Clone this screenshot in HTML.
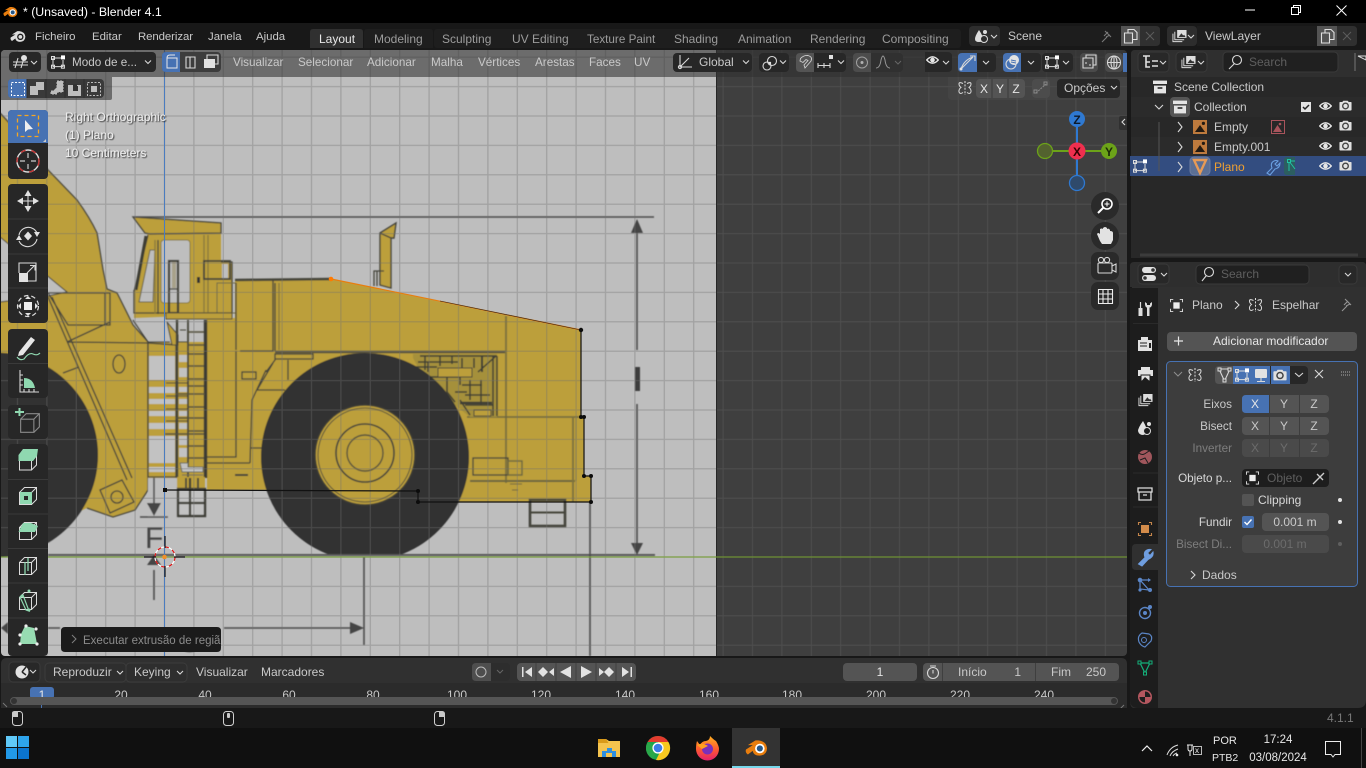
<!DOCTYPE html>
<html lang="pt"><head><meta charset="utf-8"><title>Blender 4.1</title>
<style>
html,body{margin:0;padding:0;background:#000;width:1366px;height:768px;overflow:hidden}
svg{display:block}
text{font-family:"Liberation Sans",sans-serif;font-size:12px;fill:#c9c9c9}
.tab{fill:#9c9c9c}.d{fill:#6c6c6c}.m{text-anchor:middle}.e{text-anchor:end;font-size:11.700px}.w{fill:#e6e6e6}
.tb{fill:#ececec}.ic{fill:none;stroke:#d8d8d8;stroke-width:1.100}.f{fill:#e2e2e2}
.dk{fill:#272727}.bt{fill:#545454}.bl{fill:#4772b3}
.l{fill:none;stroke:#45443a;stroke-width:1.300}.lt{fill:none;stroke:#8a7a3e;stroke-width:1.400}
.dim{fill:none;stroke:#4c4c4c;stroke-width:1.600}
.tm{font-size:11.400px}.hd{font-size:11.700px}.tr{font-size:11.500px;fill:#e8e8e8}
</style></head><body>
<svg width="1366" height="768" viewBox="0 0 1366 768" xmlns="http://www.w3.org/2000/svg">
<defs>
<pattern id="g1" patternUnits="userSpaceOnUse" x="149.800" y="542.300" width="29.400" height="29.400"><path d="M14.700 0V29.400M0 14.700H29.400" stroke="#707070" stroke-opacity=".36" stroke-width="1.300" fill="none"/></pattern>
<pattern id="g2" patternUnits="userSpaceOnUse" x="149.800" y="542.300" width="29.400" height="29.400"><path d="M14.700 0V29.400M0 14.700H29.400" stroke="#4e4e4e" stroke-width="1" fill="none"/></pattern>
<filter id="b" x="-5%" y="-5%" width="110%" height="110%"><feGaussianBlur stdDeviation=".6"/></filter>
<filter id="s" x="-5%" y="-20%" width="110%" height="140%"><feDropShadow dx="1" dy="1" stdDeviation=".6" flood-color="#000" flood-opacity=".75"/></filter>
<clipPath id="vp"><rect x="1" y="50" width="1126" height="606" rx="4"/></clipPath>
<clipPath id="im"><rect x="1" y="50" width="715" height="606"/></clipPath>
<clipPath id="wh"><rect x="200" y="340" width="300" height="216"/></clipPath>
<clipPath id="pop"><rect x="61" y="627" width="160" height="25"/></clipPath>
<symbol id="eye" viewBox="0 0 14 10"><path d="M.8 5Q7-1.800 13.200 5Q7 11.800 .8 5Z" fill="none" stroke="#e6e6e6" stroke-width="1.500"/><circle cx="7" cy="5" r="2.500" fill="#e6e6e6"/></symbol>
<symbol id="cam" viewBox="0 0 14 12"><path d="M1.200 2.200H3.500L4.600 .8H9.400L10.500 2.200H12.800Q13.600 2.200 13.600 3V10.600Q13.600 11.400 12.800 11.400H1.200Q.4 11.400 .4 10.600V3Q.4 2.200 1.200 2.200Z" fill="#e0e0e0"/><circle cx="7" cy="6.500" r="3.800" fill="#444"/><circle cx="7" cy="6.500" r="2.300" fill="#e0e0e0"/></symbol>
<symbol id="bl" viewBox="0 0 24 18"><path fill="#e87d0d" d="M1 10.500L8.200 6H3L11 1H14Q22 2 23 9Q23 16.500 15 17Q9 17 8 12L3 15.800Q0 13.600 1 10.500Z"/><circle cx="15.500" cy="9.500" r="5" fill="#fff"/><circle cx="15.500" cy="9.500" r="3.200" fill="#265787"/></symbol>
<symbol id="blw" viewBox="0 0 24 18"><path fill="#dcdcdc" d="M1 10.500L8.200 6H3L11 1H14Q22 2 23 9Q23 16.500 15 17Q9 17 8 12L3 15.800Q0 13.600 1 10.500Z"/><circle cx="15.500" cy="9.500" r="4.800" fill="#181818"/><circle cx="15.500" cy="9.500" r="2.800" fill="#dcdcdc"/></symbol>
<symbol id="mir" viewBox="0 0 14 14"><path d="M7 0V14" stroke="#ddd" stroke-dasharray="2 1.400" fill="none"/><path d="M5 2.500Q1 .5 1 3Q1 5 3 6.500Q.6 8 1 11Q2 13.600 5 11.500M9 2.500Q13 .5 13 3Q13 5 11 6.500Q13.400 8 13 11Q12 13.600 9 11.500" fill="none" stroke="#ddd"/></symbol>
<symbol id="col" viewBox="0 0 14 14"><path d="M0 .6H14V4H0Z" fill="#e4e4e4"/><path d="M1 5.600H13V13.400H1Z" fill="#e4e4e4"/><rect x="4.600" y="7.200" width="4.800" height="1.600" fill="#282828"/></symbol>
<symbol id="vtx" viewBox="0 0 14 14"><path d="M2 3H10.400M2 3V11.600H12V5" fill="none" stroke="#ddd"/><rect x=".5" y="1.500" width="3" height="3" fill="none" stroke="#ddd"/><rect x=".5" y="10.200" width="3" height="3" fill="none" stroke="#ddd"/><rect x="10.400" y="10.200" width="3" height="3" fill="none" stroke="#ddd"/><rect x="10" y=".4" width="4" height="4" fill="#fff"/></symbol>
<symbol id="lay" viewBox="0 0 16 14"><path d="M1 4.500V13H11" fill="none" stroke="#ddd"/><path d="M3 2.500V11H13" fill="none" stroke="#ddd"/><rect x="5.500" y=".6" width="10" height="8.400" fill="#ddd"/><path d="M7 8L10 4L12 6.400L13 5.600L14.400 8Z" fill="#333"/></symbol>
<symbol id="ctr" viewBox="0 0 14 14"><path d="M.5 3.500V.5H3.500M10.500 .5H13.500V3.500M13.500 10.500V13.500H10.500M3.500 13.500H.5V10.500" fill="none" stroke="#ddd"/><rect x="3.600" y="3.600" width="6.800" height="6.800" fill="#ededed"/></symbol>
<symbol id="emp" viewBox="0 0 14 14"><rect width="14" height="14" fill="#bd7a3d"/><path d="M2 12L7 5L12 12Z" fill="#221a12"/><circle cx="10.400" cy="3.400" r="1.600" fill="#221a12"/></symbol>
<symbol id="cube" viewBox="0 0 20 20"><path d="M1.500 6.500H13.500V18.500H1.500ZM1.500 6.500L6.500 1.500H18.500V13.500L13.500 18.500M13.500 6.500L18.500 1.500" fill="none" stroke="#dcdcdc" stroke-width="1"/></symbol>
<linearGradient id="ff" x1="0" y1="0" x2="0" y2="1"><stop offset="0" stop-color="#ffb020"/><stop offset=".55" stop-color="#ff5a30"/><stop offset="1" stop-color="#e3206f"/></linearGradient>
</defs>

<!-- base -->
<rect width="1366" height="768" fill="#181818"/>
<rect width="1366" height="23" fill="#000"/>
<use href="#bl" x="3" y="6" width="15" height="12"/>
<text x="23" y="16" style="fill:#fff;font-size:12.300px">* (Unsaved) - Blender 4.1</text>
<path d="M1245 10H1255" stroke="#fff"/><path d="M1291.500 7.500H1298.500V14.500H1291.500ZM1293.500 7.500V5.500H1300.500V12.500H1298.500" stroke="#fff" fill="none"/><path d="M1336.500 5.500L1346.500 15.500M1346.500 5.500L1336.500 15.500" stroke="#fff" fill="none"/>

<!-- topbar -->
<use href="#blw" x="10" y="30" width="16" height="13"/>
<text x="35" y="40" class="tm">Ficheiro</text><text x="92" y="40" class="tm">Editar</text><text x="138" y="40" class="tm" textLength="55">Renderizar</text><text x="208" y="40" class="tm">Janela</text><text x="256" y="40" class="tm">Ajuda</text>
<path d="M310 48V32Q310 29 313 29H360Q363 29 363 32V48Z" fill="#303030"/>
<path d="M364 48V32Q364 29 367 29H430Q433 29 433 32V48Z" fill="#1e1e1e"/>
<rect x="434" y="29" width="527" height="19" rx="3" fill="#1e1e1e"/>
<text x="319" y="43" class="w">Layout</text>
<text x="374" y="43" class="tab">Modeling</text><text x="442" y="43" class="tab">Sculpting</text><text x="512" y="43" class="tab">UV Editing</text><text x="587" y="43" class="tab hd">Texture Paint</text><text x="674" y="43" class="tab">Shading</text><text x="738" y="43" class="tab">Animation</text><text x="810" y="43" class="tab">Rendering</text><text x="882" y="43" class="tab">Compositing</text>

<!-- scene selectors -->
<rect x="969" y="26" width="31" height="20" rx="4" fill="#2d2d2d"/>
<path d="M979 30Q975 36 975 39Q975 42 979 42Q983 42 983 39Q983 36 979 30Z" fill="#ddd"/><circle cx="985" cy="32" r="2" fill="#ddd"/><circle cx="984" cy="39" r="3.500" fill="#2d2d2d" stroke="#ddd"/>
<path d="M991 35l3 3l3-3" class="ic"/>
<rect x="1000" y="26" width="121" height="20" fill="#1d1d1d"/><text x="1008" y="40">Scene</text>
<path d="M1102 42l5-5M1105 31l6 6M1108 32l-4 4M1110 35l-4 2" class="ic" stroke-opacity=".5"/>
<rect x="1121" y="26" width="19" height="20" fill="#545454"/><path d="M1128 33V29.500H1134L1137 32.500V39.500H1133M1124.500 33H1132.500V43H1124.500Z" fill="none" stroke="#e0e0e0" stroke-width="1.100"/>
<path d="M1140 26h16q4 0 4 4v12q0 4-4 4h-16Z" fill="#303030"/><path d="M1146 32l8 8M1154 32l-8 8" stroke="#5d5d5d" fill="none"/>
<rect x="1167" y="26" width="30" height="20" rx="4" fill="#2d2d2d"/><use href="#lay" x="1172" y="29" width="15" height="14"/><path d="M1188 35l3 3l3-3" class="ic"/>
<rect x="1197" y="26" width="120" height="20" fill="#1d1d1d"/><text x="1205" y="40">ViewLayer</text>
<rect x="1317" y="26" width="20" height="20" fill="#545454"/><path d="M1325 33V29.500H1331L1334 32.500V39.500H1330M1321.500 33H1329.500V43H1321.500Z" fill="none" stroke="#e0e0e0" stroke-width="1.100"/>
<path d="M1337 26h16q4 0 4 4v12q0 4-4 4h-16Z" fill="#303030"/><path d="M1343 32l8 8M1351 32l-8 8" stroke="#5d5d5d" fill="none"/>

<!-- viewport -->
<g clip-path="url(#vp)">
<rect x="0" y="50" width="1128" height="606" fill="#3f3f3f"/>
<rect x="716" y="50" width="412" height="606" fill="url(#g2)"/>
<rect x="716" y="50" width="1" height="606" fill="#262626"/>
<g clip-path="url(#im)">
<rect x="1" y="50" width="715" height="606" fill="#bebebe"/>
<g filter="url(#b)">
<!-- loader bucket / arm -->
<path d="M0 113Q30 145 48 170L77 200Q90 218 97 233L103 270L107 289L117 293L133 325L148 342V490L135 510L113 517L87 508L60 520L0 540Z" fill="#bc9f3b"/>
<path d="M0 113Q30 145 48 170L77 200Q90 218 97 233L103 270L107 289L117 293L133 325L148 342V490L135 510L113 517L87 508" class="l"/>
<path d="M0 237L67 292L48 296L0 302Z" fill="#bebebe" stroke="#45443a"/>
<path d="M48 293H110V325H68ZM105 293V325M110 322L67 342M67 342L148 343M48 297L127 480M52 297L132 478M63 373L79 367" class="l"/>
<ellipse cx="119" cy="364" rx="6" ry="9" class="l"/>
<path d="M100 490L122 480L134 502L110 513Z" class="l"/><circle cx="117" cy="497" r="6" class="l"/>
<!-- engine section background -->
<rect x="148" y="342" width="60" height="136" fill="#bc9f3b"/>
<path d="M148 343L176 345V477H148Z" class="l"/>
<!-- main body -->
<path d="M207 318H235V281L331 279L581 330V417H584V476H591V502H418V490H207Z" fill="#bc9f3b"/>
<path d="M235 280L331 279" stroke="#45443a" stroke-width="2.500" fill="none"/>
<!-- cabin -->
<path d="M133 217L221 223V262H232V314L134 318V290L148 235L145 233Z" fill="#bc9f3b"/>
<path d="M133 217L221 223V233L150 234L145 233ZM134 290V313L232 313V262H221M148 235L134 292" class="l"/>
<path d="M146 236L136 290" stroke="#3e3d36" stroke-width="3" fill="none"/>
<path d="M150 250L155 250L153 302L139 302Z" fill="#bebebe" stroke="#6a6548"/>
<path d="M155 240L155 314" class="lt"/><path d="M158 240L158 314" class="l"/>
<rect x="161" y="240" width="29" height="63" rx="3" fill="#bebebe" stroke="#8a7a3e"/>
<rect x="169" y="261" width="9" height="52" fill="none" stroke="#3e3d36" stroke-width="2.200"/>
<path d="M169 289H178" class="l"/><rect x="172" y="262" width="4" height="26" fill="#a8a28a"/>
<path d="M204 235V313" class="lt"/><path d="M208 235V313" class="lt"/>
<rect x="204" y="261" width="26" height="18" fill="none" stroke="#45443a" stroke-width="1.800"/><rect x="222" y="264" width="6" height="14" fill="#bebebe"/>
<rect x="197" y="277" width="3" height="6" fill="#333"/>
<rect x="217" y="283" width="19" height="30" fill="none" stroke="#6f6a48"/>
<rect x="166" y="313" width="66" height="6" fill="#bc9f3b" stroke="#55513c"/>
<!-- ladder and slots -->
<path d="M133 320L175 323V343L150 342Z" fill="#bebebe"/><path d="M133 320L148 342H170" class="l"/>
<path d="M167 322L178 335V345H172Z" fill="#bc9f3b" stroke="#45443a"/>
<g fill="#c2c2c2"><rect x="149" y="356" width="26" height="24"/><rect x="149" y="387" width="26" height="6"/><rect x="149" y="399" width="26" height="5"/><rect x="149" y="411" width="26" height="5"/><rect x="149" y="423" width="26" height="6"/><rect x="149" y="436" width="26" height="27"/><rect x="149" y="467" width="26" height="5"/>
<rect x="179" y="355" width="8" height="7"/><rect x="179" y="368" width="8" height="9"/><rect x="179" y="387" width="8" height="5"/><rect x="179" y="399" width="8" height="5"/><rect x="179" y="411" width="8" height="5"/><rect x="179" y="423" width="8" height="6"/><rect x="179" y="436" width="8" height="9"/><rect x="179" y="448" width="8" height="9"/></g>
<path d="M177 320V480" stroke="#45443a" stroke-width="2.400" fill="none"/><path d="M188 320V480" stroke="#45443a" stroke-width="1.800" fill="none"/><path d="M205.500 320V478" stroke="#3b3b36" stroke-width="3.400" fill="none"/>
<path d="M188 332H204M188 345H204M188 354H204M188 366H204M188 379H204M188 386H204M176 394H205M188 407H204M176 418H204M188 431H204M165 434H204M188 446H204M188 458H204" stroke="#55513c" stroke-width="1.600" fill="none"/>
<path d="M180 330H186M178 342H187M166 383H188M166 396H188M166 409H188M166 421H188" stroke="#45443a" fill="none"/>
<path d="M180 463H188V467H203V472H182ZM182 475H203" fill="#c2c2c2" stroke="#6a6a5a"/>
<!-- lower ladder -->
<rect x="148" y="478" width="29" height="40" fill="#bebebe"/>
<rect x="177" y="477" width="28" height="39" fill="#bc9f3b"/>
<rect x="178" y="489" width="27" height="27" fill="#c2c2c2" stroke="#3e3d36" stroke-width="2.400"/>
<path d="M190 478V516M178 503H205" stroke="#3e3d36" stroke-width="2.200" fill="none"/><path d="M186 478V490M198 478V490" stroke="#45443a" stroke-width="1.800" fill="none"/>
<!-- body details -->
<path d="M236 283V350M275 283V351M273 280V351H240" class="l"/><path d="M279 283V350" class="lt"/>
<path d="M275 352H505" stroke="#5a5540" stroke-width="2.400" fill="none"/>
<path d="M236 351V457H207M205 463H250" class="l"/>
<rect x="242" y="372" width="14" height="7" class="l"/>
<path d="M275 354H313V359H275ZM273 363L257 390H285M266 370L252 400L250 463M250 448H263M275 354V360L266 372M288 360V380" class="l"/>
<path d="M235 475H248" stroke="#45443a" stroke-width="2" fill="none"/>
<!-- hood details -->
<path d="M506 316V483" stroke="#80733e" stroke-width="2" fill="none"/>
<path d="M467 417H581" stroke="#6c6640" stroke-width="1.600" fill="none"/>
<path d="M470 481H575" stroke="#6c6640" stroke-width="2" fill="none"/>
<path d="M573 417V502" stroke="#80733e" stroke-width="2" fill="none"/>
<path d="M576 417V481" stroke="#9a8a3e" stroke-width="1" fill="none"/>
<rect x="473" y="458" width="35" height="17" class="l"/><rect x="508" y="461" width="14" height="14" fill="none" stroke="#6c6640" stroke-width="1.400"/>
<path d="M510 484H522M512 490H518" stroke="#6c6640" fill="none"/>
<!-- engine -->
<path d="M413 354H497V417H470L455 405L445 390L425 380L413 358Z" fill="#a5903a"/>
<path d="M420 356H497M418 362H458M425 356V370M440 356V366M415 367H437M430 377H460V385M447 377V392L455 402M455 392H467M470 380V400M478 372L496 356M481 380V405M462 385H482M465 395H490M465 405H493M493 356V416M497 356V416M428 362V372M452 356V364M462 358V368M474 358V368M460 400L470 415" stroke="#403f36" stroke-width="1.500" fill="none"/>
<path d="M460 403H492" stroke="#3e3d36" stroke-width="2.500" fill="none"/><path d="M482 356V372" stroke="#3e3d36" stroke-width="2" fill="none"/>
<rect x="438" y="368" width="34" height="9" fill="#bc9f3b" stroke="#45443a"/>
<path d="M474 410H491V416H474Z" fill="#bc9f3b" stroke="#45443a"/>
<!-- wheels -->
<circle cx="-4.400" cy="455" r="102.400" fill="#303030"/>
<circle cx="365" cy="457" r="104" fill="#303030" clip-path="url(#wh)"/>
<circle cx="365" cy="455" r="50" fill="#bc9f3b" stroke="#3e3d36" stroke-width="1.600"/>
<circle cx="365" cy="455" r="47" fill="none" stroke="#55513c"/>
<circle cx="365" cy="453" r="29" fill="#bc9f3b" stroke="#45443a" stroke-width="1.600"/>
<circle cx="365" cy="453" r="18" fill="none" stroke="#55513c" stroke-width="1.400"/>
<!-- exhaust -->
<path d="M380 233L396 223L394 238H391V288L380 285Z" fill="#bc9f3b" stroke="#45443a" stroke-width="1.400"/><path d="M380 233L391 238" class="l"/>
<path d="M374 286V271H384M377 271V286" class="l"/>
<!-- front step -->
<rect x="530" y="500" width="35" height="26" fill="none" stroke="#45443a" stroke-width="2.600"/><path d="M530 512.500H565" stroke="#45443a" stroke-width="2" fill="none"/>
<!-- dimensions -->
<path d="M133 217H654" stroke="#4c4c4c" stroke-width="1.500" fill="none"/>
<path d="M637 232V350M637 404V545" class="dim" stroke-width="1.800"/>
<path d="M637 219L631 233H643ZM637 555L631 543H643Z" fill="#444"/>
<rect x="635" y="367" width="5" height="24" fill="#3d3d3d"/>
<path d="M48 555H655" stroke="#565656" stroke-width="2" fill="none"/>
<path d="M154 478V510M154 570V600M140 517H168" class="dim"/>
<path d="M154 516L147 503H161ZM154 555L147 565H161Z" fill="#444"/>
<text x="145" y="548" style="font-size:30px;fill:#454545">F</text>
<text x="176" y="652" style="font-size:34px;fill:#454545">G</text>
<path d="M224 628H352M364 557V645M48 628H60M590 502V656" class="dim"/>
<path d="M364 628L350 622V634Z" fill="#444"/>
<path d="M1 628L8 622V634Z" fill="#444"/>
</g>
<rect x="1" y="50" width="715" height="606" fill="url(#g1)"/>
</g>
<!-- axes -->
<path d="M164.500 50V656" stroke="#4a7cc0" stroke-width="1"/>
<path d="M0 557H1128" stroke="#74a12e" stroke-width="1"/>
<!-- mesh -->
<path d="M581 330V417H584V476H591V502H418V491L165 490" fill="none" stroke="#111" stroke-width="1.200"/>
<path d="M331 279L581 330" stroke="#e87d0d" stroke-width="1.200" fill="none"/>
<path d="M440 301L581 330" stroke="#222" stroke-width=".6" fill="none"/>
<g fill="#0c0c0c"><circle cx="581" cy="330" r="2.200"/><circle cx="581" cy="417" r="2"/><circle cx="584" cy="417" r="2"/><circle cx="584" cy="476" r="2"/><circle cx="591" cy="476" r="2"/><circle cx="591" cy="502" r="2"/><circle cx="418" cy="502" r="2"/><circle cx="418" cy="491" r="2"/><rect x="163" y="488" width="4" height="4"/></g>
<circle cx="331" cy="279" r="2.300" fill="#ff7a00"/>
<!-- 3d cursor -->
<circle cx="165" cy="557" r="10" fill="none" stroke="#fff" stroke-width="1.200"/>
<circle cx="165" cy="557" r="10" fill="none" stroke="#e01010" stroke-width="1.200" stroke-dasharray="3.900 3.900"/>
<path d="M144 557H156M174 557H185M165 536V548M165 566V577" stroke="#111" stroke-width="1.200"/>
<circle cx="164.500" cy="557" r="2.300" fill="#f0902a"/>
<!-- header overlays -->
<rect x="0" y="50" width="1128" height="27" fill="#303030" fill-opacity=".58"/>
<path d="M1 77H112V98Q112 100 110 100H1Z" fill="#303030" fill-opacity=".58"/>
<path d="M948 77H1128V100H952Q948 100 948 96Z" fill="#484848" fill-opacity=".55"/>
</g>

<!-- viewport header controls -->
<rect x="9" y="52" width="32" height="20" rx="4" class="dk"/>
<path d="M13 62H28M18 58L15 68M24 58L21 68M13 65H28" class="ic" stroke-width=".9"/><circle cx="24" cy="58" r="3" class="f"/><path d="M31 61l3 3l3-3" class="ic"/>
<rect x="47" y="52" width="109" height="20" rx="4" class="dk"/><use href="#vtx" x="51" y="55" width="14" height="14"/>
<text x="72" y="66" class="hd">Modo de e...</text><path d="M145 60.500l3 3l3-3" class="ic"/>
<rect x="162" y="52" width="59" height="20" rx="4" fill="#3d3d3d"/>
<path d="M162 56q0-4 4-4h14v20h-14q-4 0-4-4Z" class="bl"/>
<path d="M167 58H177V68H167Z M167 58Q167 55 170 55H175" fill="none" stroke="#e8e8e8"/>
<path d="M186 57H195V68H186ZM190 57V68" class="ic"/>
<path d="M204 59H215V68H204Z" class="f"/><path d="M207 59V55H218V64H215" class="ic"/>
<text x="233" y="66" class="hd">Visualizar</text><text x="298" y="66" class="hd">Selecionar</text><text x="367" y="66" class="hd">Adicionar</text><text x="431" y="66" class="hd">Malha</text><text x="478" y="66" class="hd">Vértices</text><text x="535" y="66" class="hd">Arestas</text><text x="589" y="66" class="hd">Faces</text><text x="634" y="66" class="hd">UV</text>
<rect x="673" y="53" width="79" height="19" rx="4" class="dk"/><path d="M680 55V67H692M680 67L689 58" class="ic"/><circle cx="680" cy="67" r="1.600" class="ic"/>
<text x="699" y="66">Global</text><path d="M743 60.500l3 3l3-3" class="ic"/>
<rect x="759" y="53" width="30" height="19" rx="4" class="dk"/><circle cx="767" cy="66" r="4" class="ic"/><circle cx="772" cy="61" r="4.500" class="ic"/><circle cx="770" cy="63" r="1.200" class="f"/><path d="M780 60.500l3 3l3-3" class="ic"/>
<rect x="796" y="53" width="50" height="19" rx="4" class="dk"/><path d="M796 57q0-4 4-4h14v19h-14q-4 0-4-4Z" class="bt"/>
<path d="M805 68L811 61Q813 57 808 55.500Q804 54.800 800.500 58.500L800 61L803 62.500L806 59.500L808 60.500L804 65Z" fill="none" stroke="#cfcfcf" stroke-width=".9"/>
<path d="M818 68V63M824 68V63M830 68V63M818 65.500H830" class="ic" stroke-width=".9"/><rect x="829" y="55" width="4" height="4" class="f"/><path d="M838 60.500l3 3l3-3" class="ic"/>
<rect x="853" y="53" width="50" height="19" rx="4" fill="#303030"/><path d="M853 57q0-4 4-4h14v19h-14q-4 0-4-4Z" fill="#4c4c4c"/>
<circle cx="862" cy="62.500" r="5.500" fill="none" stroke="#a0a0a0"/><circle cx="862" cy="62.500" r="1.500" fill="#b0b0b0"/>
<path d="M876 68Q880 68 881 60Q882 56 883 56Q884 56 885 60Q886 68 890 68" fill="none" stroke="#999"/>
<path d="M895 61l3 3l3-3" fill="none" stroke="#666"/>
<path d="M925 52H947Q952 52 952 56V68Q952 72 947 72H925Z" class="dk"/><use href="#eye" x="926" y="55" width="13" height="10"/><path d="M943 61l3 3l3-3" class="ic"/>
<rect x="958" y="53" width="38" height="19" rx="4" class="dk"/><path d="M958 57q0-4 4-4h15v19h-15q-4 0-4-4Z" class="bl"/><path d="M961 69L973 57M961 69Q964 60 973 57" class="ic"/><path d="M970 56H975V61" class="ic"/><circle cx="961" cy="69" r="1.500" class="f"/><path d="M983 61l3 3l3-3" class="ic"/>
<rect x="1003" y="53" width="38" height="19" rx="4" class="dk"/><path d="M1003 57q0-4 4-4h14v19h-14q-4 0-4-4Z" class="bl"/><circle cx="1011" cy="64" r="5" class="ic"/><circle cx="1014" cy="60" r="5" class="f"/><path d="M1011 60l5 1M1011 62l5 1" stroke="#4772b3" fill="none"/><path d="M1028 61l3 3l3-3" class="ic"/>
<rect x="1042" y="53" width="31" height="19" rx="4" class="dk"/><use href="#vtx" x="1045" y="55" width="14" height="14"/><path d="M1063 61l3 3l3-3" class="ic"/>
<rect x="1080" y="53" width="18" height="19" rx="4" fill="#4a4a4a"/><path d="M1083 58H1093V68H1083ZM1086 58V55H1096V65H1093" class="ic"/><path d="M1085 63h2M1089 65h2" stroke="#ddd" fill="none"/>
<rect x="1105" y="53" width="18" height="19" rx="4" fill="#4a4a4a"/><circle cx="1114" cy="62.500" r="6.500" class="ic"/><path d="M1107.500 62.500H1120.500M1114 56V69" class="ic"/><ellipse cx="1114" cy="62.500" rx="3" ry="6.500" class="ic"/>
<rect x="1123" y="53" width="4" height="19" class="bl"/>

<!-- row 2 left -->
<rect x="8" y="79" width="96" height="19" rx="4" fill="#3a3a3a"/><path d="M8 83q0-4 4-4h15v19h-15q-4 0-4-4Z" class="bl"/>
<rect x="11.500" y="82.500" width="13" height="13" fill="none" stroke="#fff" stroke-dasharray="2 1.500"/>
<path d="M30 92V86H36V82H44V90H38V95H30Z" fill="#bdbdbd"/>
<path d="M51 91H57V94H51ZM57 87V81H63V92H52" fill="#bdbdbd" stroke="#bdbdbd" stroke-dasharray="2 1"/>
<path d="M68 85H81V96H68Z" fill="#bdbdbd"/><rect x="73" y="84" width="4" height="4" fill="#333"/><rect x="73" y="86" width="5" height="5" fill="#333"/>
<rect x="87.500" y="82.500" width="13" height="13" fill="none" stroke="#bdbdbd" stroke-dasharray="2 1.500"/><rect x="91" y="86" width="6" height="6" fill="#bdbdbd"/>
<path d="M27 79V98M46 79V98M65 79V98M84 79V98" stroke="#2d2d2d"/>

<!-- row 2 right -->
<use href="#mir" x="958" y="81" width="14" height="14"/>
<rect x="976" y="79" width="49" height="19" rx="4" class="bt"/><text x="984" y="93" class="w m">X</text><text x="1000" y="93" class="w m">Y</text><text x="1016" y="93" class="w m">Z</text><path d="M992 79V98M1008 79V98" stroke="#3a3a3a"/>
<rect x="1032" y="79" width="18" height="19" rx="4" fill="#4c4c4c"/><path d="M1036 93L1046 84" stroke="#888" stroke-dasharray="2 1" fill="none"/><rect x="1034" y="90" width="3" height="3" fill="none" stroke="#888"/><rect x="1044" y="82" width="3" height="3" fill="none" stroke="#888"/>
<rect x="1057" y="79" width="63" height="19" rx="4" class="dk"/><text x="1064" y="92">Opções</text><path d="M1111 86l3 3l3-3" class="ic"/>

<!-- gizmo -->
<path d="M1077 127V176" stroke="#2f79d1" stroke-width="2"/><path d="M1052 151H1102" stroke="#6ca319" stroke-width="2"/>
<circle cx="1045" cy="151" r="7.500" fill="#53622f" stroke="#6ca319" stroke-width="1.300"/>
<circle cx="1077" cy="183" r="7.500" fill="#2f4a6b" stroke="#2f79d1" stroke-width="1.300"/>
<circle cx="1077" cy="119" r="8" fill="#2f79d1"/><circle cx="1109" cy="151" r="8" fill="#6ca319"/><circle cx="1077" cy="151" r="8.500" fill="#ef2f4e"/>
<text x="1077" y="124" class="m" style="font-weight:bold;font-size:12px;fill:#0e1a2a">Z</text><text x="1109" y="156" class="m" style="font-weight:bold;font-size:12px;fill:#1c2a08">Y</text><text x="1077" y="156" class="m" style="font-weight:bold;font-size:12px;fill:#300">X</text>
<path d="M1127 116v14h-6q-2 0-2-2v-10q0-2 2-2Z" fill="#303030"/><path d="M1125 119l-3 3l3 3" class="ic"/>
<!-- nav -->
<circle cx="1105" cy="206" r="14" fill="#2a2a2a"/><circle cx="1107" cy="204" r="5" fill="none" stroke-width="1.600" stroke="#fff"/><path d="M1103 208L1098 213" stroke="#fff" stroke-width="2"/><path d="M1104.500 204h5M1107 201.500v5" stroke="#fff"/>
<circle cx="1105" cy="236" r="14" fill="#2a2a2a"/><path d="M1100 241L1097 234Q1098 232 1100 234V229Q1102 228 1103 229V228Q1105 226 1107 228V229Q1109 228 1110 230V231Q1113 231 1113 233V240L1111 244H1102Z" class="f"/>
<rect x="1091" y="252" width="28" height="28" rx="7" fill="#2a2a2a"/><rect x="1098" y="263" width="14" height="10" rx="1" class="ic"/><circle cx="1101" cy="260" r="2.600" class="ic"/><circle cx="1107" cy="260" r="2.600" class="ic"/><path d="M1112 266l4-2v8l-4-2" class="ic"/>
<rect x="1091" y="282" width="28" height="28" rx="7" fill="#2a2a2a"/><path d="M1098.500 289.500H1112.500V303.500H1098.500ZM1103 289.500V303.500M1108 289.500V303.500M1098.500 294H1112.500M1098.500 299H1112.500" fill="none" stroke="#eee" stroke-width="1.100"/>

<!-- toolbar -->
<rect x="8" y="110" width="40" height="69" rx="4" class="dk"/>
<path d="M8 114q0-4 4-4h32q4 0 4 4v29h-40Z" class="bl"/>
<rect x="17.500" y="115.500" width="21" height="21" fill="none" stroke="#f5a623" stroke-width="1.300" stroke-dasharray="4 3"/>
<path d="M25 120V132L28 129.500L33 129Z" fill="#eee"/><path d="M43 142l3-3v3Z" fill="#ccc"/>
<circle cx="28" cy="161" r="11" fill="none" stroke="#ddd" stroke-width="1.400"/><circle cx="28" cy="161" r="11" fill="none" stroke="#c03030" stroke-width="1.400" stroke-dasharray="5 6"/><path d="M28 153V158M28 164V169M20 161H25M31 161H36" stroke="#ccc" stroke-width="1.200"/>

<rect x="8" y="184" width="40" height="139" rx="4" class="dk"/>
<path d="M8 219H48M8 254H48M8 288H48" stroke="#3a3a3a"/>
<path d="M28 190L24.500 196H31.500ZM28 212L24.500 206H31.500ZM17 201L23 197.500V204.500ZM39 201L33 197.500V204.500Z M27.500 196h1v10h-1ZM23 200.500h10v1H23Z" class="f"/>
<path d="M19 235A9.500 9.500 0 0 1 37 233M37 239A9.500 9.500 0 0 1 19 241" class="ic" stroke-width="1.300"/><path d="M28 231.500L32 236L28 240.500L24 236Z" class="f"/><path d="M34 232H40L37 237ZM16 240H22L19 235Z" class="f"/>
<rect x="19" y="273" width="9" height="9" class="f"/><path d="M19 273V263H36V281H28" class="ic"/><path d="M27 273L34 266M30 265.500H35V270.500" class="ic" stroke-width="1.300"/>
<circle cx="28" cy="306" r="10.500" fill="none" stroke="#ddd" stroke-width="1.200" stroke-dasharray="4.500 3"/><rect x="24" y="302" width="8" height="8" fill="#eee"/><path d="M28 296l-3 3h6ZM28 316l-3-3h6ZM18 306l3-3v6ZM38 306l-3-3v6Z" class="f"/>

<rect x="8" y="329" width="40" height="69" rx="4" class="dk"/><path d="M8 363.500H48" stroke="#3a3a3a"/>
<path d="M19 352L31 337L35 340L23 355L18 356Z" fill="#e6e6e6"/>
<path d="M17 355Q20 359 24 357Q29 350 33 352Q37 354 40 351" fill="none" stroke="#8fd8b0" stroke-width="1.200" transform="translate(0,2)"/>
<path d="M20 370V392H39M20 375H23M20 380H23M20 385H23M24 392V389M29 392V389M34 392V389" class="ic" stroke-width="1.600"/><path d="M24 388V378Q33 378 35 388Z" fill="#8fd8b0"/>

<rect x="8" y="405" width="40" height="34" rx="4" class="dk"/>
<use href="#cube" x="19" y="412" width="22" height="22" style="opacity:.55"/>
<path d="M15 412H24M19.500 408V416" stroke="#8fd8b0" stroke-width="2"/>

<rect x="8" y="444" width="40" height="212" rx="4" class="dk"/>
<path d="M8 479.500H48M8 514H48M8 548.500H48M8 583H48M8 618H48" stroke="#3a3a3a"/>
<use href="#cube" x="18" y="449" width="20" height="25"/><path d="M18.500 455L23 449H38L37 456L33 461H18.500Z" fill="#8fd8b0"/>
<use href="#cube" x="18" y="486" width="20" height="20"/><path d="M20 492H32V504H20ZM24 496H28V500H24Z" fill="#8fd8b0"/><rect x="24" y="496" width="4" height="4" fill="#282828"/>
<use href="#cube" x="18" y="521" width="20" height="20"/><path d="M18.500 532L23 523H31L38 526L35 532Z" fill="#8fd8b0"/>
<use href="#cube" x="18" y="556" width="20" height="20"/><path d="M25 562V575M28 558V571" stroke="#8fd8b0" stroke-width="1.300"/>
<use href="#cube" x="18" y="591" width="20" height="20"/><path d="M23 595L20 597L26 610L29 611Z" fill="none" stroke="#8fd8b0" stroke-width="1.200"/><circle cx="29" cy="591" r="1.500" fill="#8fd8b0"/><circle cx="22" cy="596" r="1.500" fill="#8fd8b0"/><circle cx="29" cy="610" r="1.500" fill="#8fd8b0"/>
<path d="M25 626L34 628L37 644H20L21 634Z" fill="#97dcb2"/><g fill="#eee"><circle cx="26" cy="626" r="1.600"/><circle cx="36" cy="629" r="1.600"/><circle cx="20" cy="635" r="1.600"/><circle cx="20" cy="644" r="1.600"/><circle cx="37" cy="644" r="1.600"/></g>

<!-- viewport text -->
<g filter="url(#s)"><text x="65" y="121" class="tb">Right Orthographic</text><text x="65" y="139" class="tb">(1) Plano</text><text x="65" y="157" class="tb">10 Centimeters</text></g>

<!-- popup -->
<path d="M61 631q0-4 4-4h152q4 0 4 4v17q0 4-4 4H65q-4 0-4-4Z" fill="#1b1b1b"/>
<path d="M72 635l4 4l-4 4" fill="none" stroke="#808080" stroke-width="1"/>
<g clip-path="url(#pop)"><text x="83" y="644" style="fill:#8c8c8c;font-size:11.500px">Executar extrusão de região</text></g>

<!-- outliner -->
<path d="M1131 54q0-4 4-4h231v208h-235Z" fill="#282828"/>
<path d="M1131 54q0-4 4-4h231v27h-235Z" fill="#2f2f2f"/>
<rect x="1131" y="97" width="235" height="20" fill="#2b2b2b"/><rect x="1131" y="137" width="235" height="20" fill="#2b2b2b"/>
<rect x="1130" y="156" width="236" height="20" fill="#334d80"/>
<rect x="1138" y="52" width="31" height="20" rx="4" fill="#282828" stroke="#3a3a3a"/><path d="M1143 56H1150M1146 56V67H1150M1146 62H1150M1152 61H1158M1152 66H1158" stroke="#e0e0e0" stroke-width="1.600" fill="none"/><path d="M1160 61l3 3l3-3" class="ic"/>
<rect x="1176" y="52" width="31" height="20" rx="4" fill="#282828" stroke="#3a3a3a"/><use href="#lay" x="1181" y="55" width="15" height="14"/><path d="M1198 61l3 3l3-3" class="ic"/>
<rect x="1223" y="52" width="115" height="20" rx="4" fill="#202020" stroke="#3a3a3a"/><circle cx="1237" cy="60" r="4.500" class="ic"/><path d="M1234 64L1229 69" class="ic"/><text x="1249" y="66" style="fill:#5f5f5f">Search</text>
<path d="M1355 53V71" stroke="#777"/><path d="M1358 56H1366V60Z" fill="none" stroke="#ddd"/>
<use href="#col" x="1153" y="80" width="14" height="14"/><text x="1174" y="91">Scene Collection</text>
<path d="M1155 105l4 4l4-4" class="ic"/><rect x="1170" y="97" width="20" height="20" rx="4" fill="#555"/><use href="#col" x="1173" y="100" width="14" height="14"/><text x="1194" y="111">Collection</text>
<rect x="1301" y="102" width="10" height="10" class="f"/><path d="M1303 107l2 2l4-4" stroke="#222" stroke-width="1.500" fill="none"/>
<use href="#eye" x="1319" y="101" width="13" height="10"/><use href="#cam" x="1339" y="100" width="13" height="11"/>
<path d="M1159 122V171" stroke="#555"/>
<path d="M1178 122l4 5l-4 5" class="ic"/><use href="#emp" x="1193" y="120" width="14" height="14"/><text x="1214" y="131">Empty</text>
<rect x="1271.500" y="120.500" width="13" height="13" fill="none" stroke="#a9545c"/><path d="M1273 132L1277.500 125L1282 132Z" fill="#a9545c"/><circle cx="1280" cy="124" r="1.300" fill="#a9545c"/>
<use href="#eye" x="1319" y="121" width="13" height="10"/><use href="#cam" x="1339" y="120" width="13" height="11"/>
<path d="M1178 142l4 5l-4 5" class="ic"/><use href="#emp" x="1193" y="140" width="14" height="14"/><text x="1214" y="151">Empty.001</text>
<use href="#eye" x="1319" y="141" width="13" height="10"/><use href="#cam" x="1339" y="140" width="13" height="11"/>
<use href="#vtx" x="1133" y="159" width="14" height="14"/>
<path d="M1178 162l4 5l-4 5" class="ic"/><rect x="1190" y="157" width="20" height="18" rx="4" fill="#5b6f94" stroke="#6c7da0"/><path d="M1194 160H1206L1200 173Z" fill="none" stroke="#e69a56" stroke-width="2.400"/>
<text x="1214" y="171" style="fill:#f0a030">Plano</text>
<path d="M1267 173L1272 168Q1270 163 1274 161Q1276 160 1278 161L1275 164L1277 166L1280 163Q1280 168 1275 169L1270 175Z" fill="none" stroke="#6a9fe0" stroke-width="1.100"/>
<path d="M1295 157h-8q-3 0-3 3v12q0 3 3 3h8Z" fill="#2c5e60"/><path d="M1289 161L1295 161M1289 161L1295 169M1289 161V171" stroke="#1fc4a4" fill="none"/><rect x="1287.500" y="159.500" width="3" height="3" fill="#2c5e60" stroke="#1fc4a4"/>
<use href="#eye" x="1319" y="161" width="13" height="10"/><use href="#cam" x="1339" y="160" width="13" height="11"/>
<path d="M1140 255H1358" stroke="#3c3c3c" stroke-width="3"/>

<!-- properties -->
<path d="M1132 266q0-4 4-4h226q4 0 4 4v434q0 8-8 8h-224Q1130 708 1130 700Z" fill="#303030"/>
<path d="M1130 288H1158V708H1138Q1130 708 1130 700Z" fill="#1d1d1d"/>
<path d="M1130 266q0-4 4-4h228q4 0 4 4v21h-236Z" fill="#2e2e2e"/>
<rect x="1138" y="264" width="31" height="20" rx="4" fill="#282828" stroke="#3a3a3a"/><rect x="1142" y="267" width="14" height="6" rx="3" class="f"/><rect x="1142" y="275" width="14" height="6" rx="3" class="f"/><circle cx="1153" cy="270" r="1.800" fill="#333"/><circle cx="1145" cy="278" r="1.800" fill="#333"/><path d="M1161 273l3 3l3-3" class="ic"/>
<rect x="1196" y="265" width="113" height="19" rx="4" fill="#202020" stroke="#3a3a3a"/><circle cx="1209" cy="272" r="4.500" class="ic"/><path d="M1206 276L1202 281" class="ic"/><text x="1221" y="278" style="fill:#5f5f5f">Search</text>
<rect x="1339" y="265" width="18" height="19" rx="4" fill="#282828" stroke="#3a3a3a"/><path d="M1345 273l3 3l3-3" class="ic"/>
<!-- prop tabs -->
<path d="M1140.500 302V308" stroke="#ddd" stroke-width="1.200"/><rect x="1138.500" y="308" width="4" height="8" fill="#ddd"/>
<path d="M1145 302V304.500Q1145.500 307.500 1147 307.500V316H1149.500V307.500Q1151.500 307.500 1152 304.500V302L1150 303.500V305H1147V303.500Z" fill="#ddd"/>
<path d="M1133 323.500H1158" stroke="#2a2a2a"/>
<path d="M1138 340H1152V351H1138ZM1141 337H1148V340H1141Z" class="f"/><path d="M1140 343H1147M1140 346H1147" stroke="#222"/><rect x="1149" y="343" width="2" height="5" fill="#222"/>
<path d="M1138 370H1153V376H1138ZM1141 367H1150V370H1141Z" class="f"/><path d="M1141 375H1150V381H1141Z" class="f" stroke="#1d1d1d"/><path d="M1142 380.500L1145 377L1149 380.500Z" fill="#1d1d1d"/>
<use href="#lay" x="1138" y="393" width="15" height="14"/>
<path d="M1143 421Q1138 428 1138 431Q1139 435 1143 435Q1147 434 1147 431Q1147 428 1143 421Z" class="f"/><circle cx="1149" cy="424" r="2" class="f"/><circle cx="1147" cy="431" r="3.500" fill="#1d1d1d" stroke="#ddd"/>
<circle cx="1145" cy="457" r="7" fill="#a0565c"/><path d="M1139 453Q1142 456 1146 453L1149 451M1140 460L1145 458L1148 463" stroke="#1d1d1d" fill="none"/>
<path d="M1133 473H1158M1133 507H1158" stroke="#2a2a2a"/>
<path d="M1138 488H1152V492H1138ZM1139 492V500H1151V492M1143 495H1147" fill="none" stroke="#ddd" stroke-width="1.300"/>
<path d="M1138.500 525V522.500H1141M1149 522.500H1151.500V525M1151.500 533V535.500H1149M1141 535.500H1138.500V533" fill="none" stroke="#c4854a" stroke-width="1.100"/><rect x="1141" y="525" width="8" height="8" fill="#d28b4a"/>
<path d="M1132 548q0-4 4-4h22v26h-22q-4 0-4-4Z" fill="#303030"/>
<path d="M1138.500 564L1145 557.500Q1143 552 1147 550Q1149 549 1151 549.500L1147.500 553L1150 555.500L1153 552Q1154 557 1148 559.500L1142 566Z" fill="#6f9ee0" stroke="#6f9ee0"/>
<path d="M1140 580V589L1149 590M1140 580L1149 590M1140 580H1150" stroke="#5b86c7" stroke-width="1.200" fill="none"/><circle cx="1140" cy="580" r="2.300" fill="#5b86c7"/><circle cx="1140" cy="590" r="1.600" fill="#5b86c7"/><circle cx="1150" cy="590" r="2" fill="#5b86c7"/><path d="M1148 578l3 2l-3 2" fill="#5b86c7"/>
<circle cx="1145" cy="613" r="5.500" fill="none" stroke="#5b86c7" stroke-width="1.400"/><circle cx="1145" cy="613" r="2" fill="#5b86c7"/><circle cx="1150" cy="607" r="2" fill="#5b86c7"/>
<path d="M1139 643Q1137 637 1142 634L1149 635Q1153 637 1151 642L1145 648Q1141 647 1139 643Z" fill="none" stroke="#5b86c7" stroke-width="1.200" transform="translate(0,-1)"/><circle cx="1144" cy="640" r="2.500" fill="none" stroke="#5b86c7"/>
<path d="M1140 663H1150L1145 673Z" fill="none" stroke="#14b17a" stroke-width="1.200"/><rect x="1138" y="661" width="3" height="3" fill="#1d1d1d" stroke="#14b17a"/><rect x="1149" y="661" width="3" height="3" fill="#1d1d1d" stroke="#14b17a"/><rect x="1143.500" y="672" width="3" height="3" fill="#1d1d1d" stroke="#14b17a"/>
<circle cx="1145" cy="697" r="7" fill="#b4575f"/><path d="M1145 697V691.500A5.500 5.500 0 0 1 1150.500 697ZM1145 697V702.500A5.500 5.500 0 0 1 1139.500 697Z" fill="#1d1d1d"/>

<use href="#ctr" x="1170" y="299" width="13" height="13"/><text x="1192" y="309">Plano</text><path d="M1235 301l4 4l-4 4" class="ic"/><use href="#mir" x="1248" y="298" width="15" height="14"/><text x="1272" y="309">Espelhar</text>
<path d="M1342 311l5-5M1345 299l6 6M1348 301l-4 4M1350 304l-4 2" class="ic" stroke-opacity=".6"/>
<rect x="1167" y="332" width="190" height="19" rx="4" class="bt"/><path d="M1174 341H1183M1178.500 336.500V345.500" stroke="#e6e6e6" stroke-width="1.200"/><text x="1213" y="345" class="w">Adicionar modificador</text>
<!-- modifier -->
<rect x="1166.500" y="361.500" width="191" height="225" rx="4" fill="#3d3d3d" stroke="#4772b3"/>
<path d="M1174 372l4 4l4-4" fill="none" stroke="#8f8f8f"/><use href="#mir" x="1188" y="368" width="14" height="14"/>
<rect x="1215" y="366" width="93" height="18" rx="4" class="dk"/><path d="M1215 370q0-4 4-4h14v18h-14q-4 0-4-4Z" class="bt"/><rect x="1233" y="366" width="19" height="18" class="bl"/><rect x="1252" y="366" width="18" height="18" class="bl"/><rect x="1271" y="366" width="19" height="18" class="bl"/>
<path d="M1219 369H1230L1224.500 381Z" class="ic"/><rect x="1218" y="368" width="3" height="3" fill="#555" stroke="#ddd"/><rect x="1228" y="368" width="3" height="3" fill="#555" stroke="#ddd"/><rect x="1223" y="379" width="3" height="3" fill="#555" stroke="#ddd"/>
<use href="#vtx" x="1235" y="368" width="14" height="14"/>
<rect x="1255" y="369" width="12" height="9" rx="1" class="f"/><path d="M1261 378V381M1257 381.500H1265" class="ic"/>
<use href="#cam" x="1273" y="369" width="14" height="12"/>
<path d="M1295 373l4 3.500l4-3.500" class="ic"/>
<path d="M1315 370L1323 378M1323 370L1315 378" class="ic"/>
<path d="M1341 372h9M1341 375h9" stroke="#aaa" stroke-dasharray="1 1"/>
<text x="1232" y="408" class="e">Eixos</text><text x="1232" y="430" class="e">Bisect</text><text x="1232" y="452" class="e" style="fill:#7e7e7e">Inverter</text>
<rect x="1242" y="395" width="87" height="18" rx="4" class="bt"/><path d="M1242 399q0-4 4-4h23v18h-23q-4 0-4-4Z" class="bl"/>
<rect x="1242" y="417" width="87" height="18" rx="4" class="bt"/><rect x="1242" y="439" width="87" height="18" rx="4" fill="#4a4a4a"/>
<path d="M1269.500 395V457M1299.500 395V457" stroke="#3d3d3d"/>
<text x="1255" y="408" class="m w">X</text><text x="1284" y="408" class="m">Y</text><text x="1314" y="408" class="m">Z</text>
<text x="1255" y="430" class="m">X</text><text x="1284" y="430" class="m">Y</text><text x="1314" y="430" class="m">Z</text>
<text x="1255" y="452" class="m d">X</text><text x="1284" y="452" class="m d">Y</text><text x="1314" y="452" class="m d">Z</text>
<text x="1232" y="482" class="e" style="fill:#d8d8d8">Objeto p...</text>
<rect x="1242" y="469" width="87" height="18" rx="4" fill="#1d1d1d"/><use href="#ctr" x="1246" y="471" width="13" height="14"/><text x="1267" y="482" style="fill:#5f5f5f">Objeto</text><path d="M1313 484L1320 477M1317 474L1323 480M1320 477L1324 473" stroke="#ccc" stroke-width="1.400"/>
<rect x="1242" y="494" width="12" height="12" rx="2" class="bt"/><text x="1258" y="504" style="fill:#d8d8d8">Clipping</text><circle cx="1340" cy="500" r="2" class="f"/>
<text x="1232" y="526" class="e" style="fill:#d8d8d8">Fundir</text><rect x="1242" y="516" width="12" height="12" rx="2" class="bl"/><path d="M1244.500 522l2.500 2.500l4.500-5" stroke="#fff" stroke-width="1.400" fill="none"/>
<rect x="1262" y="513" width="67" height="18" rx="4" class="bt"/><text x="1295" y="526" class="m">0.001 m</text><circle cx="1340" cy="522" r="2" class="f"/>
<text x="1232" y="548" class="e" style="fill:#7e7e7e">Bisect Di...</text><rect x="1242" y="535" width="87" height="18" rx="4" fill="#4a4a4a"/><text x="1285" y="548" class="m d">0.001 m</text><circle cx="1340" cy="544" r="2" fill="#5f5f5f"/>
<path d="M1191 571l4 4l-4 4" class="ic"/><text x="1202" y="579">Dados</text>

<!-- timeline -->
<path d="M1 664q0-6 6-6h1114q6 0 6 6v44H1Z" fill="#303030"/>
<rect x="1" y="683" width="1126" height="25" fill="#2b2b2b"/>
<rect x="9" y="662" width="31" height="20" rx="4" fill="#282828" stroke="#3a3a3a"/><circle cx="22" cy="672" r="6.500" class="f"/><path d="M22 672l4-5M22 672l4 3" stroke="#282828" stroke-width="1.500"/><path d="M30 670l3 3l3-3" class="ic"/>
<rect x="45" y="663" width="81" height="19" rx="4" fill="#2e2e2e" stroke="#3c3c3c"/><text x="53" y="676">Reproduzir</text><path d="M117 671l3 3l3-3" class="ic"/>
<rect x="126" y="663" width="61" height="19" rx="4" fill="#2e2e2e" stroke="#3c3c3c"/><text x="134" y="676">Keying</text><path d="M177 671l3 3l3-3" class="ic"/>
<text x="196" y="676">Visualizar</text><text x="261" y="676">Marcadores</text>
<rect x="472" y="663" width="38" height="18" rx="4" fill="#2d2d2d"/><path d="M472 667q0-4 4-4h15v18h-15q-4 0-4-4Z" fill="#4e4e4e"/><circle cx="481" cy="672" r="5" fill="none" stroke="#bbb"/><path d="M497 670l3 3l3-3" fill="none" stroke="#666"/>
<rect x="517" y="663" width="119" height="18" rx="4" class="bt"/><path d="M536 663V681M556 663V681M576 663V681M596 663V681M616 663V681" stroke="#3f3f3f"/>
<path d="M522 667h1.500v10H522ZM532 667v10l-7-5Z" class="f"/>
<path d="M543 667l5 5l-5 5l-5-5Z" class="f"/><path d="M554 668v8l-5-4Z" class="f"/>
<path d="M571 666v12l-11-6Z" class="f"/><path d="M581 666v12l11-6Z" class="f"/>
<path d="M599 668v8l5-4Z" class="f"/><path d="M609 667l5 5l-5 5l-5-5Z" class="f"/>
<path d="M622 667v10l7-5ZM630.500 667h1.500v10h-1.500Z" class="f"/>
<rect x="843" y="663" width="74" height="18" rx="4" class="bt"/><text x="880" y="676" class="m w">1</text>
<rect x="923" y="663" width="196" height="18" rx="4" class="bt"/><path d="M942.500 663V681M1035.500 663V681" stroke="#3f3f3f"/>
<circle cx="933" cy="673" r="5.500" class="ic"/><path d="M930 666H936M933 670V673.500" class="ic"/>
<text x="958" y="676">Início</text><text x="1021" y="676" style="text-anchor:end">1</text><text x="1051" y="676">Fim</text><text x="1106" y="676" style="text-anchor:end">250</text>
<!-- ruler -->
<g style="fill:#a8a8a8"><text x="121" y="699" class="m">20</text><text x="205" y="699" class="m">40</text><text x="289" y="699" class="m">60</text><text x="373" y="699" class="m">80</text><text x="457" y="699" class="m">100</text><text x="541" y="699" class="m">120</text><text x="625" y="699" class="m">140</text><text x="709" y="699" class="m">160</text><text x="792" y="699" class="m">180</text><text x="876" y="699" class="m">200</text><text x="960" y="699" class="m">220</text><text x="1044" y="699" class="m">240</text></g>
<rect x="30" y="687" width="24" height="12" rx="3" class="bl"/><text x="42" y="699" class="m w">1</text>
<rect x="41" y="703" width="1" height="5" class="bl"/>
<rect x="10" y="697" width="1108" height="8" rx="4" fill="#555"/><circle cx="14" cy="701" r="3" fill="#333"/><circle cx="1114" cy="701" r="3" fill="#333"/>
<path d="M3 703L7 707M1124 705L1120 709" stroke="#777"/>
<rect x="0" y="708" width="1366" height="20" fill="#181818"/>
<!-- status -->
<g fill="none" stroke="#d0d0d0"><rect x="12.500" y="711.500" width="10" height="14" rx="3"/><rect x="223.500" y="711.500" width="10" height="14" rx="3"/><rect x="434.500" y="711.500" width="10" height="14" rx="3"/></g>
<path d="M12 715V713Q12 711 15 711H18V717H12Z" fill="#c8c8c8"/><rect x="227" y="713" width="3" height="5" rx="1" fill="#c8c8c8"/><path d="M439 711H442Q445 711 445 714V717H439Z" fill="#c8c8c8"/>
<text x="1327" y="722" style="fill:#787878">4.1.1</text>

<!-- taskbar -->
<rect x="0" y="728" width="1366" height="40" fill="#101010"/>
<g><rect x="6" y="736" width="11" height="11" fill="#60c9f8"/><rect x="18" y="736" width="11" height="11" fill="#2ea4ec"/><rect x="6" y="748" width="11" height="11" fill="#2299e8"/><rect x="18" y="748" width="11" height="11" fill="#0b74cf"/></g>
<path d="M598 739H606L609 741H620V757H598Z" fill="#f4c34e"/><path d="M598 739H606L608.500 743H598Z" fill="#d99a1a"/><path d="M602 757V751H607V748H612V751H616V757H612V753H606V757Z" fill="#2e8fe0"/>
<circle cx="658" cy="748" r="12" fill="#1ca44e"/><path d="M658 736A12 12 0 0 1 668.400 742H658L647.600 742A12 12 0 0 1 658 736Z" fill="#e33b2e"/><path d="M647.600 742A12 12 0 0 0 653 759L658.500 748Z" fill="#2aa84a"/><path d="M668.400 742A12 12 0 0 1 656 760L662 748L658 742Z" fill="#f8c91f"/><circle cx="658" cy="748" r="5.600" fill="#fff"/><circle cx="658" cy="748" r="4.300" fill="#3b7de8"/>
<path d="M710 736Q714 740 716 741Q719 746 719 749A11.500 11.500 0 0 1 696 749Q696 744 697 741L700 745Q702 741 706 741Q710 740 710 736Z" fill="url(#ff)"/><circle cx="707.500" cy="749" r="5.500" fill="#7b2fbb"/><path d="M697 745Q702 742 708 746L702 749Z" fill="#ffa020"/>
<rect x="732" y="728" width="48" height="40" fill="#333"/><rect x="732" y="766" width="48" height="2" fill="#76d7ea"/>
<use href="#bl" x="745" y="739" width="23" height="18"/>
<path d="M1142 751L1147 746L1152 751" fill="none" stroke="#eee" stroke-width="1.200"/>
<path d="M1167 755Q1170 747 1178 745M1170 756Q1172 751 1178 749M1173 756Q1174 754 1177 753" fill="none" stroke="#ddd"/><circle cx="1177" cy="755" r="1.300" fill="#eee"/>
<path d="M1188 745V749Q1188 751 1190 751Q1192 751 1192 749V745M1190 751V756M1187 745H1193" fill="none" stroke="#eee"/><rect x="1193.500" y="746.500" width="8" height="8" fill="none" stroke="#bbb"/><text x="1195" y="753" style="font-size:8px;fill:#eee">x</text>
<text x="1213" y="744" class="tr" style="font-size:11px">POR</text><text x="1212" y="761" class="tr" style="font-size:10.500px">PTB2</text>
<text x="1278" y="743" class="m tr">17:24</text><text x="1278" y="761" class="m tr">03/08/2024</text>
<path d="M1325.500 741.500H1340.500V754.500H1335L1333 757L1331 754.500H1325.500Z" fill="none" stroke="#eee"/>
<path d="M1361.500 728V768" stroke="#444"/>
</svg>
</body></html>
